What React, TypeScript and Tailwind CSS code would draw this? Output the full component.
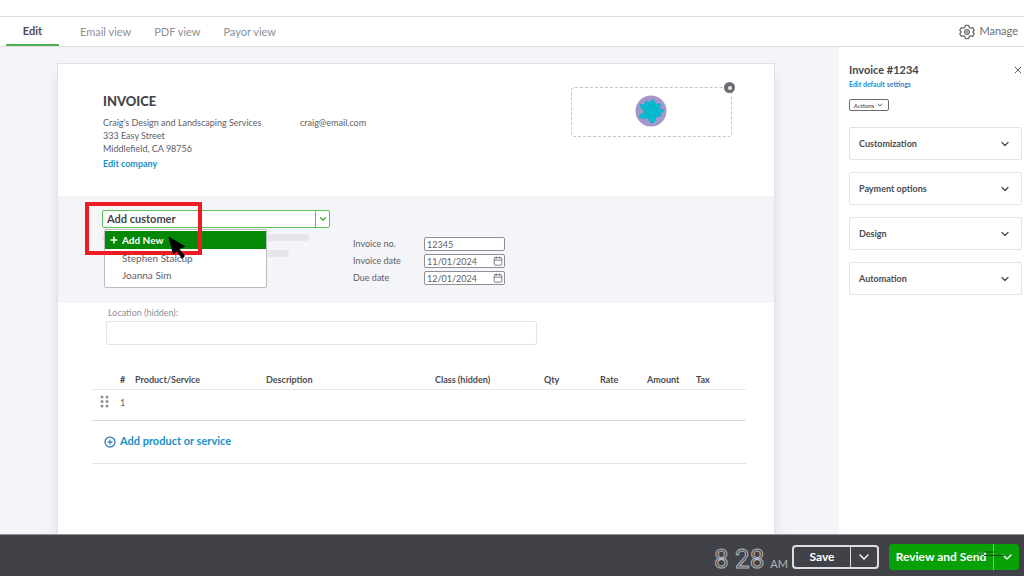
import type { ReactNode } from "react";
import { Calendar, ChevronDown, CirclePlus, Plus, X } from "lucide-react";

const tabs = ["Email view", "PDF view", "Payor view"];
const panels = ["Customization", "Payment options", "Design", "Automation"];

function GearIcon() {
  return (
    <svg viewBox="0 0 24 24" className="size-4" fill="none" stroke="currentColor" strokeWidth="2" strokeLinejoin="round">
      <path d="M9.6 2h4.8l.9 3.1 2 1.2 3.1-.8 2.4 4.1-2.2 2.3v.2l2.2 2.3-2.4 4.1-3.1-.8-2 1.2-.9 3.1H9.6l-.9-3.1-2-1.2-3.1.8-2.4-4.1 2.2-2.3v-.2L1.2 9.6l2.400-4.100 3.100.8 2-1.200z" />
      <circle cx="12" cy="12" r="3.500" />
      <circle cx="12" cy="12" r="0.500" />
    </svg>
  );
}

function FlowerLogo() {
  return (
    <svg viewBox="0 0 32 32" className="size-8" role="img" aria-label="Company logo">
      <circle cx="16" cy="16" r="15.500" fill="#a597cc" />
      <g fill="#08bcd2" stroke="#0a9fba" strokeWidth="0.5">
        <path d="M14 18C9 16 5 19 4 22C8 25 13 24 16 20Z" />
        <path d="M13 18C7 16 5 12 5 9.500C10 8.500 14 11 16 15Z" />
        <path d="M13 15C9 11 9.500 8 10.500 6C14 6 16 8 17 12Z" />
        <path d="M14 13C14 8 15.500 5.500 18 4.500C21 7 21 11 18 14Z" />
        <path d="M16 14C18 9 22 8 25.500 9C26 12 23 16 18 17Z" />
        <path d="M18 15C21 12.500 26 13.500 29 15.500C26.500 19 21 20 17 18.500Z" />
        <path d="M17 17C22 17 26 19 26.500 20C23 23 19 22.500 16 20Z" />
        <path d="M14 19C12 24 14.500 27 17.500 28.500C21 26 22 22 18 18.500Z" />
        <path d="M10 14C14 11 19 11.500 22 15C21 21 14 22 11 18Z" />
        <path d="M13 15C13 11 15 9.500 16.500 9C18.500 11 18 14 16 16Z" />
      </g>
    </svg>
  );
}

function DetailField({ id, label, value, date }: { id: string; label: string; value: string; date?: boolean }) {
  return (
    <div className="flex items-center">
      <label htmlFor={id} className="w-[71px] text-[9px] leading-[14px]">
        {label}
      </label>
      <div className="relative">
        <input
          id={id}
          defaultValue={value}
          className="block h-3.5 w-[81px] rounded-xs border border-[#8d9096] bg-white px-0.5 text-[9px] text-[#5f6066]"
        />
        {date && <Calendar className="absolute top-0.5 right-0.5 size-2.5 text-[#6b6c72]" aria-hidden />}
      </div>
    </div>
  );
}

function HeadCell({ children, className }: { children?: ReactNode; className: string }) {
  return <th className={`pb-0.5 text-left font-bold whitespace-nowrap ${className}`}>{children}</th>;
}

export default function App() {
  return (
    <div className="flex min-h-screen flex-col bg-white font-['Lato','Liberation_Sans',sans-serif] text-[#5f6066]">
      <header className="mt-4 flex h-[31px] items-stretch justify-between border-y border-[#dcdde0] pr-1.5 pl-1.5 text-[11px]">
        <nav className="flex items-stretch">
          <a href="#edit" className="mr-[21px] flex w-[53px] items-center justify-center border-b-2 border-[#53b14f] pt-0.5 font-bold text-[#4a4b50]">
            Edit
          </a>
          <div className="flex items-center gap-[23px] pt-px text-[#8d9096]">
            {tabs.map((tab) => (
              <a key={tab} href="#view">
                {tab}
              </a>
            ))}
          </div>
        </nav>
        <button className="flex items-center gap-1 text-[#6b6c72]">
          <GearIcon />
          Manage
        </button>
      </header>

      <div className="flex flex-1">
        <main className="flex flex-1 bg-[#f4f5f8] pt-4 pr-16 pl-[57px]">
          <section className="flex-1 border border-b-0 border-[#dfe1e4] bg-white shadow-[0_12px_12px_rgba(0,0,0,0.1)]">
            <div className="flex h-[132px] items-start pr-[42px] pl-[45px]">
              <div className="w-[197px] pt-[29px] text-[9px] leading-[13px]">
                <h1 className="mb-[7px] text-[13px] leading-4 font-black text-[#45464b]">INVOICE</h1>
                <p>Craig's Design and Landscaping Services</p>
                <p>333 Easy Street</p>
                <p>Middlefield, CA 98756</p>
                <a href="#company" className="mt-0.5 block font-bold text-[#1b8fc6]">
                  Edit company
                </a>
              </div>
              <p className="flex-1 pt-[52px] text-[9px] leading-[13px]">craig@email.com</p>
              <div className="relative mt-[23px] flex h-[50px] w-[161px] items-center justify-center rounded-sm border border-dashed border-[#c3c5c9] pr-0.5 pb-0.5">
                <FlowerLogo />
                <button
                  aria-label="Remove logo"
                  className="absolute -top-1.5 -right-1 flex size-[11px] items-center justify-center rounded-full bg-[#6b6c72]"
                >
                  <span className="size-1 rounded-xs bg-[#e8e8ea]" />
                </button>
              </div>
            </div>

            <div className="relative h-[107px] bg-[#f4f5f8] pt-3.5 pl-11">
              <div className="flex h-[18px] w-[228px] rounded-xs border border-[#5cc35a] bg-white">
                <input
                  aria-label="Customer"
                  defaultValue="Add customer"
                  className="min-w-0 flex-1 px-1 text-[11px] font-bold text-[#45464b]"
                />
                <button aria-label="Show customers" className="flex w-3.5 items-center justify-center border-l border-[#5cc35a] text-[#3ca63a]">
                  <ChevronDown className="size-2.5" strokeWidth={3} />
                </button>
              </div>
              <div className="flex pt-1">
                <div className="w-[251px] space-y-[9px] pt-0.5">
                  <div className="h-[7px] w-[207px] rounded-full bg-[#e6e7ea]" />
                  <div className="h-[7px] w-[187px] rounded-full bg-[#e6e7ea]" />
                </div>
                <div className="space-y-[3px] pt-[5px]">
                  <DetailField id="number" label="Invoice no." value="12345" />
                  <DetailField id="invoice-date" label="Invoice date" value="11/01/2024" date />
                  <DetailField id="due-date" label="Due date" value="12/01/2024" date />
                </div>
              </div>

              <ul className="absolute top-[33px] left-[46px] w-[163px] rounded-xs border border-[#b9bbc0] bg-white pt-px pb-[3px] text-[10px] text-[#5f6066]">
                <li className="flex h-[18px] items-center gap-[3px] bg-[#058805] pl-1 font-bold text-white">
                  <Plus className="size-2.5" strokeWidth={3.5} />
                  Add New
                </li>
                <li className="flex h-[18px] items-center pl-[17px]">Stephen Stalcup</li>
                <li className="flex h-[17px] items-center pl-[17px]">Joanna Sim</li>
              </ul>
              <div className="absolute top-1.5 left-[27px] h-[53px] w-[117px] border-4 border-[#ed1c24]" />
              <svg viewBox="0 0 20 25" className="absolute top-10 left-[110px] h-[25px] w-5" fill="#000">
                <path d="M0.500 0.500 L17.500 10.500 L11.500 13 L17 20 L14 23 L9 15.500 L5 18.500 Z" />
              </svg>
            </div>

            <div className="pt-1 pr-[28px] pl-[34px]">
              <div className="w-[445px] pl-3.5">
                <label htmlFor="location" className="block pl-0.5 text-[9px] leading-3 text-[#8d9096]">
                  Location (hidden):
                </label>
                <input id="location" className="mt-0.5 block h-6 w-full rounded-xs border border-[#e2e3e6] bg-white px-2 text-[9px]" />
              </div>

              <table className="mt-[27px] w-full table-fixed border-collapse text-[9px]">
                <thead>
                  <tr className="h-[17px] border-b border-[#e8e9eb] text-[#4a4b50]">
                    <HeadCell className="w-7" />
                    <HeadCell className="w-[15px]">#</HeadCell>
                    <HeadCell className="w-[131px]">Product/Service</HeadCell>
                    <HeadCell className="w-[169px]">Description</HeadCell>
                    <HeadCell className="w-[109px]">Class (hidden)</HeadCell>
                    <HeadCell className="w-14">Qty</HeadCell>
                    <HeadCell className="w-[47px]">Rate</HeadCell>
                    <HeadCell className="w-[49px]">Amount</HeadCell>
                    <HeadCell className="w-auto">Tax</HeadCell>
                  </tr>
                </thead>
                <tbody>
                  <tr className="h-[31px] border-b border-[#d9dadd]">
                    <td className="pb-1.5 pl-2">
                      <svg viewBox="0 0 9 13" className="h-[13px] w-[9px]" fill="#8d9096">
                        {[2, 6.5, 11].map((y) => (
                          <g key={y}>
                            <circle cx="2" cy={y} r="1.500" />
                            <circle cx="7" cy={y} r="1.500" />
                          </g>
                        ))}
                      </svg>
                    </td>
                    <td className="pb-1">1</td>
                    <td colSpan={7} />
                  </tr>
                </tbody>
              </table>
              <div className="flex h-[43px] items-center border-b border-[#e2e3e6] pl-3">
                <button className="flex items-center gap-1 text-[11px] font-bold text-[#1b8fc6]">
                  <CirclePlus className="size-3 text-[#2a78bd]" strokeWidth={2.5} />
                  Add product or service
                </button>
              </div>
            </div>
          </section>
        </main>

        <aside className="w-[185px] pt-[15px] pr-0.5 pl-2.5">
          <div className="flex items-center justify-between">
            <h2 className="text-[11px] leading-4 font-bold text-[#45464b]">Invoice #1234</h2>
            <button aria-label="Close" className="-mr-0.5">
              <X className="size-3 text-[#5f6066]" />
            </button>
          </div>
          <a href="#settings" className="block text-[7px] leading-[13px] font-bold text-[#2a8bd0]">
            Edit default settings
          </a>
          <button className="mt-2 flex h-3 w-10 items-center justify-center gap-0.5 rounded-xs border border-[#6b6c72] text-[6px] font-bold">
            Actions
            <ChevronDown className="size-2" strokeWidth={3} />
          </button>
          <div className="mt-4 space-y-3">
            {panels.map((panel) => (
              <button
                key={panel}
                className="flex h-[33px] w-full items-center justify-between rounded-xs border border-[#e2e3e6] pr-2.5 pl-[9px] text-[9px] font-bold text-[#4a4b50]"
              >
                {panel}
                <ChevronDown className="size-3" strokeWidth={2.5} />
              </button>
            ))}
          </div>
        </aside>
      </div>

      <footer className="flex h-[42px] items-center justify-end border-t border-[#8d9096] bg-[#414247] pt-0.5 pr-[5px] text-white">
        <p className="flex items-baseline gap-1.5 pt-1 pr-1 text-[#b4b5b9]">
          <span className="font-['Roboto',sans-serif] text-[26px] leading-8 text-transparent [-webkit-text-stroke:1px_#b4b5b9]">
            8 28
          </span>
          <span className="text-[11px]">AM</span>
        </p>
        <div className="flex h-6 w-[87px] rounded-sm border-2 border-[#dcdde0] text-[12px] font-bold">
          <button className="flex-1">Save</button>
          <button aria-label="More save options" className="flex w-[27px] items-center justify-center border-l border-[#dcdde0]">
            <ChevronDown className="size-4" />
          </button>
        </div>
        <div className="relative ml-2.5 flex h-[26px] w-[130px] rounded-sm bg-[#07a107] text-[12px] font-bold">
          <button className="flex-1 whitespace-nowrap">Review and Send</button>
          <button aria-label="More send options" className="flex w-[26px] items-center justify-center border-l border-[#6fc96f]">
            <ChevronDown className="size-4" />
          </button>
          <svg viewBox="0 0 30 8" className="absolute top-1.5 left-[88px] h-2 w-[30px]" fill="none" stroke="#15351b">
            <circle cx="3" cy="4" r="2" stroke="#4f9e57" />
            <path d="M7 2h11" strokeDasharray="2 0.500" />
            <path d="M7 5.500h21" strokeDasharray="3 0.500" />
          </svg>
        </div>
      </footer>
    </div>
  );
}
